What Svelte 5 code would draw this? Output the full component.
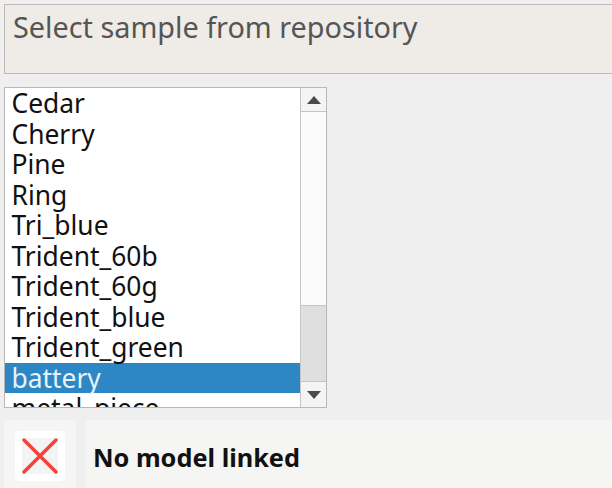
<script>
  const items = ['Cedar','Cherry','Pine','Ring','Tri_blue','Trident_60b','Trident_60g','Trident_blue','Trident_green','battery','metal_piece'];
  const selected = 'battery';
</script>

<div class="page">
  <div class="title">Select sample from repository</div>
  <div class="listbox">
    <ul class="list">
      {#each items as item}
        <li class:sel={item === selected}>{item}</li>
      {/each}
    </ul>
    <div class="scroll">
      <div class="btn"><svg width="14" height="8" viewBox="0 0 14 8"><path d="M7 0 L14 8 H0 Z" fill="#4a4a4a"/></svg></div>
      <div class="thumb"></div>
      <div class="track"></div>
      <div class="btn down"><svg width="14" height="8" viewBox="0 0 14 8"><path d="M0 0 H14 L7 8 Z" fill="#4a4a4a"/></svg></div>
    </div>
  </div>
  <div class="status">
    <div class="iconcell">
      <div class="tile">
        <svg class="cross" width="36" height="36" viewBox="0 0 36 36"><path d="M2 2 L34 34 M34 2 L2 34" stroke="#f44336" stroke-width="3.4" stroke-linecap="round" fill="none"/></svg>
      </div>
    </div>
    <div class="msg">No model linked</div>
  </div>
</div>

<style>
  :global(body) { margin: 0; background: #efefef; overflow: hidden; }
  .page { width: 612px; height: 488px; box-sizing: border-box; padding: 4px 0 0 4px; font-family: "Noto Sans", sans-serif; overflow: hidden; }
  .title { height: 70px; box-sizing: border-box; border: 1.5px solid #bdbbb8; border-right: none; background: #efebe7; color: #555; font-size: 28.8px; line-height: 34px; padding: 5px 0 0 8px; margin-bottom: 13px; }
  .listbox { width: 323px; height: 321px; box-sizing: border-box; border: 1.5px solid #b8b8b8; background: #fff; display: flex; margin-bottom: 12px; }
  .list { flex: 1; margin: 0; padding: 0; list-style: none; overflow: hidden; font-size: 26.4px; color: #111; }
  .list li { height: 30.5px; line-height: 31px; padding-left: 6.5px; }
  .list li.sel { background: #2d87c4; color: #e8f2f9; }
  .scroll { width: 26px; border-left: 1.5px solid #c4c4c4; box-sizing: border-box; display: flex; flex-direction: column; background: #f8f8f8; }
  .btn { height: 24px; flex: none; display: flex; align-items: center; justify-content: center; background: #f4f4f4; border-bottom: 1.5px solid #c4c4c4; box-sizing: border-box; }
  .btn.down { border-bottom: none; border-top: 1.5px solid #c4c4c4; height: 26px; }
  .thumb { height: 193px; flex: none; background: #fbfbfb; border-bottom: 1.5px solid #c4c4c4; }
  .track { flex: 1; background: #dfdfdf; }
  .status { display: flex; height: 68px; gap: 10px; }
  .iconcell { width: 72px; background: #f5f5f3; display: flex; align-items: center; justify-content: center; padding-top: 3px; box-sizing: border-box; }
  .tile { width: 50px; height: 50px; background: #fff; border-radius: 5px; display: flex; align-items: center; justify-content: center; }
  .cross { background: #f3f3f3; }
  .msg { flex: 1; background: #f5f5f3; font-weight: 700; font-size: 25.3px; color: #111; line-height: 74px; padding-left: 7px; }
</style>
